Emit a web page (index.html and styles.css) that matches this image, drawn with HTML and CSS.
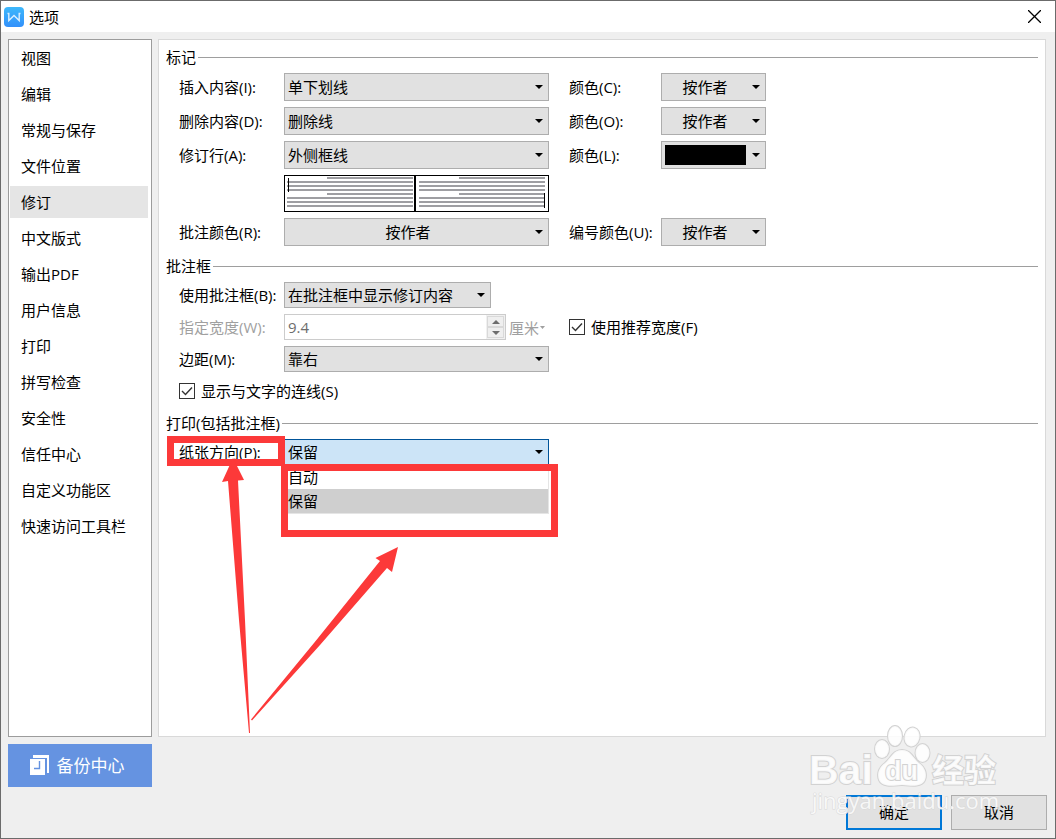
FILE: index.html
```html
<!DOCTYPE html>
<html lang="zh-CN">

<head>
    <meta charset="UTF-8" />
    <meta name="viewport" content="width=device-width, initial-scale=1">
    <title>选项</title>
    <link rel="stylesheet" href="styles.css">
</head>

<body>
    <div class="window">
        <header class="titlebar">
            <svg class="logo" viewBox="0 0 20 20" aria-hidden="true">
                <defs>
                    <linearGradient id="logo-bg" x1="0" y1="0" x2="0" y2="1">
                        <stop offset="0" stop-color="#3db8fb" />
                        <stop offset="1" stop-color="#3290fb" />
                    </linearGradient>
                </defs>
                <rect width="20" height="20" rx="4" fill="url(#logo-bg)" />
                <path d="M3.5 6.5H4.8V13.5L10 8.5L15.200 13.5V6.5H16.5" fill="none" stroke="#d9efff" stroke-width="1.4" />
            </svg>
            <h1 class="title">选项</h1>
            <button class="close" type="button" aria-label="关闭">
                <svg viewBox="0 0 12 12"><path d="M0 0L12 12M12 0L0 12" stroke="#000" stroke-width="1.2" /></svg>
            </button>
        </header>

        <div class="content">
            <nav class="sidebar">
                <a href="#">视图</a>
                <a href="#">编辑</a>
                <a href="#">常规与保存</a>
                <a href="#">文件位置</a>
                <a href="#" class="active">修订</a>
                <a href="#">中文版式</a>
                <a href="#">输出PDF</a>
                <a href="#">用户信息</a>
                <a href="#">打印</a>
                <a href="#">拼写检查</a>
                <a href="#">安全性</a>
                <a href="#">信任中心</a>
                <a href="#">自定义功能区</a>
                <a href="#">快速访问工具栏</a>
            </nav>

            <main class="panel">
                <section class="group">
                    <h2>标记</h2>
                    <div class="row">
                        <label for="insert">插入内容(I):</label>
                        <select id="insert" class="combo"><option>单下划线</option></select>
                        <label class="second" for="insert-color">颜色(C):</label>
                        <select id="insert-color" class="combo center"><option>按作者</option></select>
                    </div>
                    <div class="row">
                        <label for="delete">删除内容(D):</label>
                        <select id="delete" class="combo"><option>删除线</option></select>
                        <label class="second" for="delete-color">颜色(O):</label>
                        <select id="delete-color" class="combo center"><option>按作者</option></select>
                    </div>
                    <div class="row">
                        <label for="line">修订行(A):</label>
                        <select id="line" class="combo"><option>外侧框线</option></select>
                        <label class="second" for="line-color">颜色(L):</label>
                        <button id="line-color" class="combo swatch" type="button"><span></span></button>
                    </div>
                    <div class="row">
                        <svg class="preview" viewBox="0 0 265 37" aria-hidden="true">
                            <rect x="0.5" y="0.5" width="264" height="36" fill="#fff" stroke="#000" />
                            <path d="M131 0V37" stroke="#000" stroke-width="2" />
                            <g stroke="#9e9ea2" stroke-width="2">
                                <path d="M43 3H129M3 7H129M3 11H129M3 15H129M43 19H129M3 23H129M3 27H129M3 31H129" />
                                <path d="M175 3H261M135 7H261M135 11H261M135 15H261M175 19H261M135 23H261M135 27H261M135 31H261" />
                            </g>
                            <path d="M4.5 3V17M260.5 18V33" stroke="#000" />
                        </svg>
                    </div>
                    <div class="row">
                        <label for="comment-color">批注颜色(R):</label>
                        <select id="comment-color" class="combo center"><option>按作者</option></select>
                        <label class="second" for="number-color">编号颜色(U):</label>
                        <select id="number-color" class="combo center"><option>按作者</option></select>
                    </div>
                </section>

                <section class="group small">
                    <h2>批注框</h2>
                    <div class="row">
                        <label for="balloon">使用批注框(B):</label>
                        <select id="balloon" class="combo narrow"><option>在批注框中显示修订内容</option></select>
                    </div>
                    <div class="row">
                        <label class="disabled" for="width">指定宽度(W):</label>
                        <div class="width-field">
                            <div class="spin">
                                <input id="width" type="text" value="9.4" disabled>
                                <div class="spin-buttons">
                                    <button type="button" aria-label="增加" disabled><svg viewBox="0 0 8 4"><path d="M0 4L4 0L8 4Z" /></svg></button>
                                    <button type="button" aria-label="减少" disabled><svg viewBox="0 0 8 4"><path d="M0 0L4 4L8 0Z" /></svg></button>
                                </div>
                            </div>
                            <button class="unit" type="button" disabled>厘米<svg viewBox="0 0 5 3"><path d="M0 0H5L2.5 3Z" /></svg></button>
                        </div>
                        <label class="check second"><input type="checkbox" checked>使用推荐宽度(F)</label>
                    </div>
                    <div class="row">
                        <label for="margin">边距(M):</label>
                        <select id="margin" class="combo"><option>靠右</option></select>
                    </div>
                    <label class="check"><input type="checkbox" checked>显示与文字的连线(S)</label>
                </section>

                <section class="group small">
                    <h2>打印(包括批注框)</h2>
                    <div class="row">
                        <label for="paper">纸张方向(P):</label>
                        <div class="dropdown">
                            <select id="paper" class="combo open"><option>保留</option></select>
                            <ul class="options">
                                <li>自动</li>
                                <li class="selected">保留</li>
                            </ul>
                        </div>
                    </div>
                </section>
            </main>

            <button class="backup" type="button">
                <svg viewBox="0 0 20 20" aria-hidden="true">
                    <path d="M3 0H19V18H17V3H3Z" fill="#fff" />
                    <path d="M0 4H15V20H0Z" fill="#fff" />
                    <path d="M9.5 6V13.5H4" fill="none" stroke="#6593e1" stroke-width="1.4" />
                </svg>
                备份中心
            </button>
        </div>

        <footer class="actions">
            <button class="primary" type="button">确定</button>
            <button type="button">取消</button>
        </footer>

        <!-- red frames and arrows -->
        <svg class="marks" width="400" height="310" viewBox="160 430 400 310" aria-hidden="true">
            <g fill="none" stroke="#fc3939" stroke-width="7">
                <rect x="170.5" y="439.5" width="111" height="23" />
                <rect x="284.5" y="467.5" width="270" height="66" />
            </g>
            <g fill="#fc3939">
                <path d="M233 458L244 480L238 480.5L245 620L250 733H249L239 620L228 481L222 482Z" />
                <path d="M398 547L392 572L387 568L320 645L252 720.5L251 719.5L314 643L380 561L375.5 558Z" />
            </g>
        </svg>

        <!-- watermark -->
        <svg class="watermark" width="200" height="96" viewBox="804 722 200 96">
            <g fill="#fff" fill-opacity="0.85" stroke="#d2d2d2" stroke-width="2" paint-order="stroke">
                <text class="wm-brand" x="809" y="784">Bai</text>
                <ellipse cx="882" cy="749" rx="7" ry="9" />
                <ellipse cx="895" cy="736" rx="7" ry="10" />
                <ellipse cx="912" cy="737" rx="7.5" ry="9.5" transform="rotate(12 912 737)" />
                <ellipse cx="922.5" cy="753" rx="7" ry="9" />
                <path d="M902 750C893 750 891 758 885 763C878 768 877 775 879 780C882 787 891 786 902 785C913 786 922 787 925 780C927 775 926 768 919 763C913 758 911 750 902 750Z" />
                <text class="wm-du" x="885" y="780">du</text>
                <text class="wm-cn" x="932" y="782">经验</text>
            </g>
            <text class="wm-url" x="812" y="809">jingyan.baidu.com</text>
        </svg>
    </div>
</body>

</html>
```
FILE: styles.css
```css
* {
    box-sizing: border-box;
}

body {
    margin: 0;
    background: #f0f0f0;
    color: #000;
}

body,
button,
input,
select {
    font-family: "Open Sans", "Noto Sans CJK SC", sans-serif;
    font-size: 15px;
}

.window {
    position: relative;
    display: flex;
    flex-direction: column;
    min-height: 100vh;
    border: 1px solid #6b6b6b;
    background: #efefef;
}

/* title bar */
.titlebar {
    display: flex;
    align-items: center;
    gap: 5px;
    height: 31px;
    padding: 0 14px 0 3px;
    background: #fff;
}

.logo {
    width: 20px;
    height: 20px;
}

.title {
    flex: 1;
    margin: 0;
    font-size: 15px;
    font-weight: normal;
    line-height: 20px;
}

.close {
    display: flex;
    padding: 0;
    border: 0;
    background: none;
}

.close svg {
    width: 13px;
    height: 13px;
}

/* sidebar on the left, settings on the right */
.content {
    flex: 1;
    display: grid;
    grid-template-columns: 144px 1fr;
    grid-template-rows: 1fr 43px;
    gap: 7px 6px;
    padding: 7px 9px 8px 7px;
}

.sidebar {
    display: flex;
    flex-direction: column;
    gap: 4px;
    padding: 2px 3px 2px 1px;
    border: 1px solid #9c9c9c;
    background: #fff;
}

.sidebar a {
    padding-left: 11px;
    color: #000;
    line-height: 32px;
    text-decoration: none;
}

.sidebar .active {
    background: #e5e5e5;
}

.panel {
    padding: 7px;
    border: 1px solid #d9d9d9;
    background: #fff;
}

.group {
    display: grid;
    gap: 6px;
    margin-bottom: 10px;
}

.group h2 {
    display: flex;
    align-items: center;
    gap: 2px;
    margin: 0;
    font-size: 15px;
    font-weight: normal;
    line-height: 20px;
}

.group h2::after {
    content: "";
    flex: 1;
    height: 1px;
    background: #9e9e9e;
}

.row {
    display: grid;
    grid-template-columns: 105px 265px 112px 105px;
    align-items: center;
    margin-left: 13px;
    line-height: 20px;
    white-space: nowrap;
}

.second {
    padding-left: 20px;
}

.disabled {
    color: #a0a0a0;
}

/* drop-downs */
.combo {
    appearance: none;
    display: block;
    width: 100%;
    height: 28px;
    padding: 0 17px 0 3px;
    border: 1px solid #adadad;
    border-radius: 0;
    outline: 0;
    background: #e1e1e1 url("data:image/svg+xml,%3Csvg xmlns='http://www.w3.org/2000/svg' width='8' height='4'%3E%3Cpath d='M0 0H8L4 4Z'/%3E%3C/svg%3E") no-repeat right 5px center;
    color: #000;
}

.small .combo {
    height: 26px;
}

.combo.center {
    padding-left: 0;
    text-align: center;
    text-align-last: center;
}

.combo.narrow {
    width: 207px;
}

.combo.open {
    border-color: #005499;
    background-color: #cce4f7;
}

.swatch span {
    display: block;
    width: 81px;
    height: 20px;
    background: #000;
}

.preview {
    grid-column: 2;
    display: block;
    width: 265px;
    height: 37px;
}

.dropdown {
    position: relative;
}

.options {
    position: absolute;
    top: 100%;
    left: 0;
    right: 0;
    margin: 0;
    padding: 0;
    border: 1px solid #e5e5e5;
    border-top: 0;
    background: #fff;
    list-style: none;
}

.options li {
    padding-left: 3px;
    line-height: 24px;
}

.options .selected {
    background: #cfcfcf;
}

/* number field */
.width-field {
    display: flex;
    align-items: center;
    gap: 3px;
}

.spin {
    display: flex;
    width: 222px;
    height: 26px;
    border: 1px solid #ccc;
    background: #fff;
}

.spin input {
    flex: 1;
    min-width: 0;
    padding: 0 3px;
    border: 0;
    background: #fff;
    color: #6d6d6d;
}

.spin-buttons {
    display: grid;
    width: 19px;
    padding: 1px;
    background: #f0f0f0;
}

.spin-buttons button {
    display: flex;
    align-items: center;
    justify-content: center;
    padding: 0;
    border: 1px solid #d9d9d9;
    background: #efefef;
}

.spin-buttons svg {
    width: 8px;
    height: 4px;
    fill: #6d6d6d;
}

.unit {
    display: flex;
    align-items: center;
    gap: 1px;
    padding: 0;
    border: 0;
    background: none;
    color: #a0a0a0;
}

.unit svg {
    width: 5px;
    height: 3px;
    fill: #a0a0a0;
}

/* tick boxes */
.check {
    display: flex;
    align-items: center;
    gap: 6px;
    height: 25px;
    line-height: 20px;
}

.group > .check {
    margin-left: 13px;
}

.check input {
    appearance: none;
    flex: none;
    width: 16px;
    height: 16px;
    margin: 0;
    border: 1px solid #333;
    background: #fff url("data:image/svg+xml,%3Csvg xmlns='http://www.w3.org/2000/svg' width='14' height='14'%3E%3Cpath d='M2 7L5.5 10.5L12 3.5' fill='none' stroke='%23333' stroke-width='1.4'/%3E%3C/svg%3E") no-repeat center;
}

/* buttons at the bottom */
.backup {
    display: flex;
    align-items: center;
    justify-content: center;
    gap: 7px;
    padding: 0 6px 2px 0;
    border: 0;
    background: #6593e1;
    color: #fff;
    font-size: 17px;
}

.backup svg {
    width: 20px;
    height: 20px;
}

.actions {
    display: flex;
    justify-content: flex-end;
    gap: 9px;
    padding: 0 8px 8px;
}

.actions button {
    width: 96px;
    height: 35px;
    padding: 0 0 2px;
    border: 1px solid #adadad;
    background: #e1e1e1;
    color: #000;
}

.actions .primary {
    border: 2px solid #0078d7;
}

/* drawn over the window */
.marks,
.watermark {
    position: absolute;
    pointer-events: none;
}

.marks {
    top: 429px;
    left: 159px;
}

.watermark {
    right: 51px;
    bottom: 20px;
}

.wm-brand {
    font: bold 41px "Liberation Sans", sans-serif;
}

.wm-du {
    font: bold 27px "Liberation Sans", sans-serif;
}

.wm-cn {
    font: bold 32px "Noto Sans CJK SC", sans-serif;
}

.wm-url {
    fill: #fff;
    fill-opacity: 0.8;
    stroke: #d8d8d8;
    stroke-width: 1px;
    paint-order: stroke;
    font: 22px "Open Sans", sans-serif;
}
```
